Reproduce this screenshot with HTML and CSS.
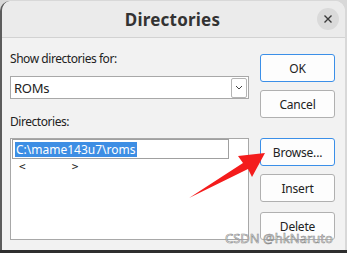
FILE: index.html
```html
<!doctype html>
<html>
<head>
    <meta charset="UTF-8">
    <title>Directories</title>
    <link rel="stylesheet" href="styles.css">
</head>
<body>
<div class="win">
    <div class="titlebar">
        <h1>Directories</h1>
        <span class="close">
            <svg width="10" height="10" viewBox="0 0 10 10"><path d="M1.5 1.5 L8.5 8.5 M8.5 1.5 L1.5 8.5" stroke="#3a3a3a" stroke-width="1.4"/></svg>
        </span>
    </div>
    <div class="main">
        <div class="left">
            <div class="lbl">Show directories for:</div>
            <div class="combo">
                <span>ROMs</span>
                <span class="drop">
                    <svg width="8" height="5" viewBox="0 0 8 5"><path d="M1 1 L4 4 L7 1" fill="none" stroke="#444" stroke-width="1"/></svg>
                </span>
            </div>
            <div class="lbl lbl2">Directories:</div>
            <div class="list">
                <div class="edit"><span class="sel">C:\mame143u7\roms</span></div>
                <div class="row"><span>&lt;</span><span>&gt;</span></div>
            </div>
        </div>
        <div class="right">
            <button class="btn focus">OK</button>
            <button class="btn">Cancel</button>
            <button class="btn focus gap">Browse...</button>
            <button class="btn">Insert</button>
            <button class="btn last">Delete</button>
        </div>
    </div>
    <!-- 标注箭头 -->
    <svg class="arrow" width="347" height="253" viewBox="0 0 347 253">
        <polygon points="265,153 238,156 243,163 189,198 248,169 252,177" fill="#f41c1c"/>
    </svg>
    <div class="mark">CSDN @hkNaruto</div>
</div>
<div class="strip"></div>
</body>
</html>
```

FILE: styles.css
```css
html,body{margin:0;padding:0}
body{width:347px;height:253px;background:#d8d8d8;overflow:hidden;font-family:"Noto Sans","DejaVu Sans",sans-serif;color:#222}
.win{position:relative;margin:1px 2px 0 0;height:249px;background:#f2f2f2;border-left:2px solid #5c5c5c;border-radius:10px 10px 0 0}
.titlebar{position:relative;height:36px;background:#ebebeb;border-bottom:1px solid #d2d2d2;border-radius:10px 10px 0 0;display:flex;align-items:center;justify-content:center}
.titlebar h1{margin:0;font-size:17px;font-weight:bold;color:#333;padding-right:2px;letter-spacing:0.2px}
.close{position:absolute;right:6px;top:7px;width:22px;height:22px;border-radius:50%;background:#dadada;display:flex;align-items:center;justify-content:center}
.main{display:flex;padding-left:8px}
.left{width:239px;padding-top:13px}
.lbl{font-size:12px;line-height:16px;height:16px;letter-spacing:-0.45px}
.lbl2{margin-top:15px}
.combo{margin-top:9px;height:21px;border:1px solid #a8a8a8;background:#fff;display:flex;align-items:center;justify-content:space-between;padding-left:3px;font-size:13px;letter-spacing:-0.3px}
.drop{width:14px;height:18px;margin-right:1px;border:1px solid #b4b4b4;border-radius:2px;display:flex;align-items:center;justify-content:center;background:#fff}
.list{margin-top:8px;height:100px;border:1px solid #a8a8a8;background:#fff}
.edit{margin-left:1px;width:213px;height:18px;border:1px solid #a0a0a0;display:flex;align-items:center;padding-left:2px;font-size:12px}
.sel{background:#3d8ee4;color:#fff;line-height:15px;padding:0 1px}
.row{display:flex;gap:46px;padding:1px 0 0 8px;font-size:11px;font-family:"DejaVu Sans Mono",monospace}
.right{margin-left:11px;padding-top:16px;display:flex;flex-direction:column}
.btn{width:75px;height:28px;margin:0 0 8px 0;border:1px solid #b0b0b0;border-radius:3px;background:#fdfdfd;font-family:"Noto Sans","DejaVu Sans",sans-serif;font-size:12px;letter-spacing:-0.2px;color:#222;padding:0}
.btn.focus{border-color:#3b8fe8}
.btn.gap{margin-top:12px}
.btn.last{margin-top:2px}
.arrow{position:absolute;left:-2px;top:-1px;pointer-events:none}
.mark{position:absolute;left:223px;top:228px;font-size:13px;color:rgba(255,255,255,.6);-webkit-text-stroke:0.6px #8a8a8a}
.strip{height:3px;background:#2e2e2e}
```
